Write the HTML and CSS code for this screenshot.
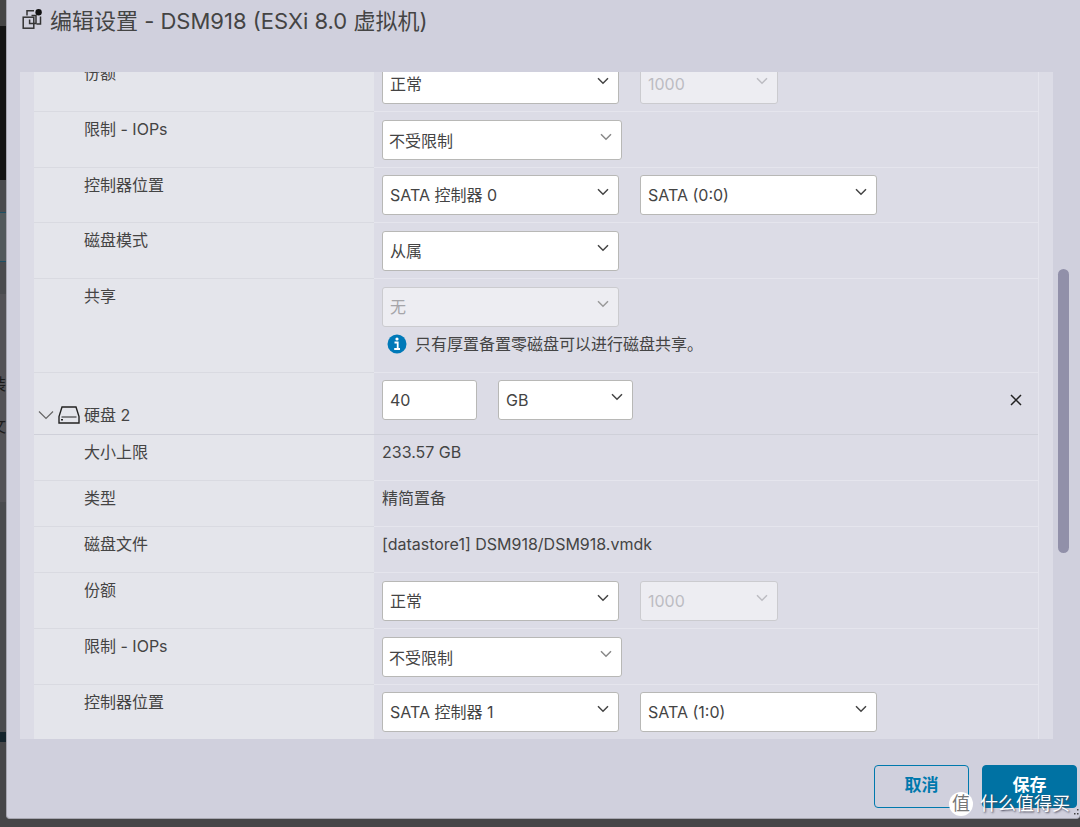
FILE: index.html
```html
<!DOCTYPE html>
<html lang="zh-CN">

<head>
  <meta charset="utf-8" />
  <meta name="viewport" content="width=device-width, initial-scale=1" />
  <title>编辑设置 - DSM918</title>
  <link rel="stylesheet" href="styles.css">
</head>

<body>
  <svg class="sprite" aria-hidden="true">
    <symbol id="chevron" viewBox="0 0 12 8">
      <path d="M1 1.2L6 6.2L11 1.2" fill="none" stroke="currentColor" stroke-width="1.5" />
    </symbol>
  </svg>

  <!-- dimmed page behind the dialog -->
  <div class="backdrop" aria-hidden="true">
    <div class="strip top"></div>
    <div class="strip console"></div>
    <div class="strip bar"></div>
    <div class="strip button"></div>
    <div class="strip bar"></div>
    <div class="strip list"><span>装</span><span>文</span></div>
    <div class="strip lower"></div>
    <div class="strip heading"></div>
    <div class="strip tasks"></div>
  </div>

  <form class="dialog">
    <header class="dialog-header">
      <svg class="vm-icon" viewBox="0 0 20 20" fill="none" stroke="#333" stroke-width="1.5">
        <path d="M5 6.5V1.8H12M18.5 7.5V15H14.5" />
        <rect x="1.2" y="8.2" width="10.6" height="11" />
        <path d="M7.6 10.5V14.6H14V6.4H9.5" />
        <circle cx="16.6" cy="3.2" r="3.2" fill="#111" stroke="none" />
      </svg>
      <h1>编辑设置 - DSM918 (ESXi 8.0 虚拟机)</h1>
    </header>

    <div class="dialog-main">
      <div class="scroll-area">
        <div class="settings">
          <div class="row">
            <label class="name" for="shares1">份额</label>
            <div class="value">
              <span class="select"><select id="shares1"><option>正常</option></select><svg><use href="#chevron" /></svg></span>
              <span class="select short disabled"><select disabled aria-label="份额值"><option>1000</option></select><svg><use href="#chevron" /></svg></span>
            </div>
          </div>
          <div class="row">
            <label class="name" for="iops1">限制 - IOPs</label>
            <div class="value">
              <span class="select combo"><input id="iops1" type="text" value="不受限制"><svg><use href="#chevron" /></svg></span>
            </div>
          </div>
          <div class="row controller">
            <label class="name" for="ctrl1">控制器位置</label>
            <div class="value">
              <span class="select"><select id="ctrl1"><option>SATA 控制器 0</option></select><svg><use href="#chevron" /></svg></span>
              <span class="select"><select aria-label="控制器端口"><option>SATA (0:0)</option></select><svg><use href="#chevron" /></svg></span>
            </div>
          </div>
          <div class="row">
            <label class="name" for="mode1">磁盘模式</label>
            <div class="value">
              <span class="select"><select id="mode1"><option>从属</option></select><svg><use href="#chevron" /></svg></span>
            </div>
          </div>
          <div class="row sharing">
            <label class="name" for="sharing1">共享</label>
            <div class="value">
              <span class="select disabled"><select id="sharing1" disabled><option>无</option></select><svg><use href="#chevron" /></svg></span>
              <p class="hint">
                <svg viewBox="0 0 20 20">
                  <circle cx="10" cy="10" r="9.5" fill="#0079b8" />
                  <circle cx="10" cy="5" r="1.6" fill="#fff" />
                  <path d="M7.5 8.5H10.7V14.5M7.2 15H13" fill="none" stroke="#fff" stroke-width="1.8" />
                </svg>
                只有厚置备置零磁盘可以进行磁盘共享。
              </p>
            </div>
          </div>

          <div class="row disk">
            <div class="name">
              <button class="toggle" type="button" aria-label="折叠"><svg viewBox="0 0 16 10"><path d="M1 1.5L8 8.5L15 1.5" fill="none" stroke="#666" stroke-width="1.2" /></svg></button>
              <svg class="disk-icon" viewBox="0 0 22 18" fill="none" stroke="#222" stroke-width="1.4">
                <path d="M4 1H18L21 10.5V17H1V10.5Z" />
                <path d="M3.5 11H18.5" stroke-width="1" />
                <path d="M3 13.8H5" />
              </svg>
              <label for="size2">硬盘 2</label>
            </div>
            <div class="value">
              <input class="size" id="size2" type="text" value="40">
              <span class="select unit"><select aria-label="单位"><option>GB</option></select><svg><use href="#chevron" /></svg></span>
              <button class="remove" type="button" aria-label="移除"><svg viewBox="0 0 12 12"><path d="M1 1L11 11M11 1L1 11" stroke="#222" stroke-width="1.5" /></svg></button>
            </div>
          </div>
          <div class="row text">
            <span class="name">大小上限</span>
            <span class="value">233.57 GB</span>
          </div>
          <div class="row text">
            <span class="name">类型</span>
            <span class="value">精简置备</span>
          </div>
          <div class="row text">
            <span class="name">磁盘文件</span>
            <span class="value">[datastore1] DSM918/DSM918.vmdk</span>
          </div>
          <div class="row">
            <label class="name" for="shares2">份额</label>
            <div class="value">
              <span class="select"><select id="shares2"><option>正常</option></select><svg><use href="#chevron" /></svg></span>
              <span class="select short disabled"><select disabled aria-label="份额值"><option>1000</option></select><svg><use href="#chevron" /></svg></span>
            </div>
          </div>
          <div class="row">
            <label class="name" for="iops2">限制 - IOPs</label>
            <div class="value">
              <span class="select combo"><input id="iops2" type="text" value="不受限制"><svg><use href="#chevron" /></svg></span>
            </div>
          </div>
          <div class="row controller">
            <label class="name" for="ctrl2">控制器位置</label>
            <div class="value">
              <span class="select"><select id="ctrl2"><option>SATA 控制器 1</option></select><svg><use href="#chevron" /></svg></span>
              <span class="select"><select aria-label="控制器端口"><option>SATA (1:0)</option></select><svg><use href="#chevron" /></svg></span>
            </div>
          </div>
        </div>
      </div>
      <div class="scrollbar"><div class="thumb"></div></div>
    </div>

    <footer class="dialog-footer">
      <button class="btn" type="button">取消</button>
      <button class="btn primary" type="button">保存</button>
    </footer>
    <svg class="resize" viewBox="0 0 6 8" fill="#444">
      <path d="M3 1h1.5v1.5H3zM0 5h1.5v1.5H0zM3 5h1.5v1.5H3z" />
    </svg>
  </form>

  <div class="watermark"><span class="logo">值</span><span>什么值得买</span></div>
</body>

</html>
```

FILE: styles.css
```css
* {
  box-sizing: border-box;
}

body {
  margin: 0;
  height: 100vh;
  overflow: hidden;
  position: relative;
  background: #48484a;
  color: #444;
  font: 16px/24px Inter, "Noto Sans CJK SC", sans-serif;
}

button,
input,
select {
  font: inherit;
  color: inherit;
  margin: 0;
}

.sprite {
  position: absolute;
  width: 0;
  height: 0;
}

/* page behind */
.backdrop {
  position: absolute;
  top: 0;
  left: 0;
  width: 100%;
  height: 100%;
  display: flex;
  flex-direction: column;
}

.strip {
  height: 32px;
  background: #4a4b4e;
}

.strip.top {
  height: 26px;
  background: #454545;
}

.strip.console {
  height: 154px;
  background: #141414;
}

.strip.button {
  height: 50px;
  background: #52595c;
  border: 1px solid #1d4f63;
  border-width: 1px 0;
}

.strip.list {
  height: 208px;
  padding-top: 78px;
  background: #535256;
  color: #1b1b1b;
}

.strip.list span {
  display: block;
  width: 6px;
  height: 42px;
  overflow: hidden;
  direction: rtl;
}

.strip.lower {
  height: 230px;
}

.strip.heading {
  height: 10px;
  background: #14232b;
}

.strip.tasks {
  flex: 1;
  background: #464648;
}

/* dialog */
.dialog {
  position: relative;
  display: flex;
  flex-direction: column;
  height: calc(100vh - 8px);
  margin-left: 6px;
  background: #d0d0dd;
  border-bottom: 1px solid #a6a6b0;
  border-left: 1px solid #a6a6b0;
  border-radius: 0 0 4px 4px;
}

.dialog-header {
  display: flex;
  gap: 8px;
  height: 72px;
  padding: 9px 15px;
  flex: none;
}

.dialog-header h1 {
  margin: 0;
  font-size: 22px;
  line-height: 24px;
  font-weight: 400;
}

.vm-icon {
  width: 20px;
  height: 20px;
}

.dialog-main {
  display: flex;
  flex: 1;
  gap: 5px;
  min-height: 0;
  padding: 0 11px 0 13px;
}

.scroll-area {
  flex: 1;
  overflow: hidden;
  padding: 0 14px;
  background: #dcdce6;
}

.settings {
  margin-top: -16px;
  border-right: 1px solid #e5e5ed;
}

.scrollbar {
  position: relative;
  width: 11px;
}

.thumb {
  position: absolute;
  top: 29.5%;
  width: 100%;
  height: 42.6%;
  border-radius: 6px;
  background: #9190a9;
}

.row {
  display: grid;
  grid-template-columns: 340px 1fr;
  min-height: 56px;
}

.row.controller {
  min-height: 55px;
}

.row.sharing {
  min-height: 94px;
}

.row.disk {
  min-height: 62px;
}

.row.text {
  min-height: 46px;
}

.name {
  padding: 5px 0 0 50px;
  background: #e4e5eb;
  border-bottom: 1px solid #d9dae1;
}

.value {
  display: flex;
  flex-wrap: wrap;
  align-content: flex-start;
  gap: 5px 21px;
  padding: 8px 8px 0;
  border-bottom: 1px solid #e5e5ed;
}

.row.controller .value {
  padding-top: 7px;
}

.row.text .value {
  padding-top: 5px;
}

.disk .name {
  display: flex;
  align-items: center;
  gap: 4px;
  padding: 22px 0 0 4px;
}

.disk .name,
.disk .value {
  border-bottom-color: #cfd0d9;
}

.disk .value {
  padding-top: 7px;
}

/* controls */
.select {
  position: relative;
  width: 237px;
  height: 40px;
}

.select.combo {
  width: 240px;
}

.select.short {
  width: 138px;
}

.select.unit {
  width: 135px;
}

.select select,
.select input,
.size {
  width: 100%;
  height: 40px;
  padding: 0 7px 1px;
  border: 1px solid #b8b8b6;
  border-radius: 3px;
  background: #fff;
  appearance: none;
}

.select.combo input {
  padding: 0 6px;
}

.size {
  width: 95px;
}

.select svg {
  position: absolute;
  top: 13px;
  right: 10px;
  width: 12px;
  height: 8px;
  pointer-events: none;
}

.select.combo svg {
  color: #888;
}

.select.disabled select {
  background: #ededf2;
  border-color: #cbcbcf;
  color: #a5a5a9;
  opacity: 1;
}

.select.disabled svg {
  color: #999;
}

.select.short.disabled select,
.select.short.disabled svg {
  color: #bcbcc2;
}

.hint {
  display: flex;
  align-items: center;
  gap: 8px;
  width: 100%;
  margin: 0;
  padding-left: 5px;
}

.hint svg {
  width: 20px;
  height: 20px;
}

.toggle,
.remove {
  display: flex;
  padding: 0;
  border: 0;
  background: none;
  cursor: pointer;
}

.toggle svg {
  width: 16px;
  height: 10px;
}

.disk-icon {
  width: 22px;
  height: 18px;
}

.remove {
  align-items: center;
  height: 40px;
  margin-left: auto;
  padding: 0 8px;
}

.remove svg {
  width: 12px;
  height: 12px;
}

/* footer */
.dialog-footer {
  display: flex;
  flex: none;
  justify-content: flex-end;
  gap: 13px;
  padding: 26px 3px 10px;
}

.btn {
  width: 95px;
  height: 43px;
  padding: 0 0 3px;
  border: 1px solid #0079ad;
  border-radius: 4px;
  background: none;
  color: #0079ad;
  font-size: 17px;
  font-weight: 700;
  cursor: pointer;
}

.btn.primary {
  background: #0072a3;
  border-color: #0072a3;
  color: #fff;
}

.resize {
  position: absolute;
  right: 0;
  bottom: 2px;
  width: 6px;
  height: 8px;
}

.watermark {
  position: absolute;
  right: 10px;
  bottom: 11px;
  display: flex;
  align-items: center;
  gap: 7px;
  color: #fff;
  font-size: 18px;
  text-shadow: 1px 1px 2px #445;
}

.watermark .logo {
  width: 24px;
  height: 24px;
  border-radius: 50%;
  background: #fff;
  color: #777;
  text-align: center;
  text-shadow: none;
}
```
